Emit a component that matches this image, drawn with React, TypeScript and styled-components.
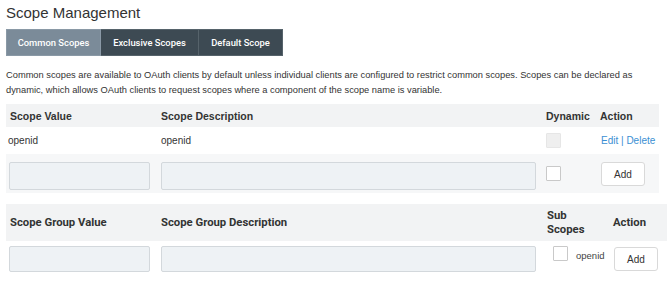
import React from 'react';
import styled, { createGlobalStyle } from 'styled-components';

const GlobalStyle = createGlobalStyle`
  body {
    margin: 0;
    background: #fff;
    font-family: "Liberation Sans", Arial, sans-serif;
    color: #333;
  }
`;

const Page = styled.div`
  padding: 4px 0 0 6px;
  width: 661px;
`;

const Title = styled.h1`
  margin: 0;
  font-size: 15px;
  line-height: 18px;
  font-weight: normal;
  color: #333;
`;

const Tabs = styled.div`
  display: flex;
  margin-top: 7px;
`;

const Tab = styled.button<{ $active?: boolean; $w: number }>`
  height: 27px;
  border: 1px solid ${p => (p.$active ? '#8a99a6' : '#56636b')};
  border-left-width: ${p => (p.$active ? '1px' : '0')};
  background: ${p => (p.$active ? '#7b8b99' : '#3d4a53')};
  color: #fff;
  font-family: Roboto, "Liberation Sans", Arial, sans-serif;
  font-size: 9.4px;
  font-weight: 500;
  padding: 0;
  width: ${p => p.$w}px;
  cursor: pointer;
`;

const Intro = styled.p`
  margin: 12px 0 0;
  font-size: 9.3px;
  line-height: 15px;
  color: #333;
  width: 650px;
`;

const Table = styled.div<{ $cols: string; $width: number }>`
  display: grid;
  grid-template-columns: ${p => p.$cols};
  width: ${p => p.$width}px;
  font-size: 10px;
`;

const HeadCell = styled.div<{ $h: number; $alt?: boolean }>`
  background: #f2f3f4;
  height: ${p => p.$h}px;
  display: flex;
  align-items: center;
  padding-left: 4px;
  font-weight: bold;
  font-size: ${p => (p.$alt ? '11.3px' : '10.5px')};
  line-height: 14px;
  color: #333;
  font-family: ${p => (p.$alt ? 'Roboto, Arial, sans-serif' : '"Liberation Sans", Arial, sans-serif')};
`;

const Cell = styled.div<{ $h: number; $shade?: boolean; $top?: number; $pl?: number }>`
  height: ${p => p.$h}px;
  box-sizing: border-box;
  background: ${p => (p.$shade ? '#f6f7f8' : '#fff')};
  display: flex;
  align-items: ${p => (p.$top !== undefined ? 'flex-start' : 'center')};
  padding-top: ${p => p.$top ?? 0}px;
  padding-left: ${p => p.$pl ?? 2}px;
  gap: 8px;
  color: #333;
`;

const TextInput = styled.input<{ $w: number; $h: number }>`
  box-sizing: border-box;
  width: ${p => p.$w}px;
  height: ${p => p.$h}px;
  background: #eef2f5;
  border: 1px solid #d3d8dc;
  border-radius: 2px;
  margin: 0;
`;

const Check = styled.span<{ $disabled?: boolean }>`
  display: inline-block;
  box-sizing: border-box;
  width: 15px;
  height: 15px;
  border: 1px solid ${p => (p.$disabled ? '#e6e6e6' : '#c9c9c9')};
  background: ${p => (p.$disabled ? '#efefef' : '#fff')};
  border-radius: 1px;
  flex: none;
`;

const SubLabel = styled.span`
  margin-top: 4px;
  font-size: 9.5px;
  color: #444;
`;

const AddButton = styled.button`
  box-sizing: border-box;
  width: 44px;
  height: 24px;
  background: #fff;
  border: 1px solid #d9d9d9;
  border-radius: 3px;
  font-family: "Liberation Sans", Arial, sans-serif;
  font-size: 10px;
  color: #333;
  padding: 0;
  margin: 0;
`;

const Links = styled.span`
  color: #3a8fd3;
  font-size: 10px;
  white-space: nowrap;
`;

const Link = styled.a`
  color: #3a8fd3;
  text-decoration: none;
`;

const Spacer = styled.div<{ $h: number }>`
  height: ${p => p.$h}px;
`;

const App = () => {
  return (
    <>
      <GlobalStyle />
      <Page>
        <Title>Scope Management</Title>
        <Tabs>
          <Tab $active $w={95}>Common Scopes</Tab>
          <Tab $w={98}>Exclusive Scopes</Tab>
          <Tab $w={84}>Default Scope</Tab>
        </Tabs>
        <Intro>
          Common scopes are available to OAuth clients by default unless individual clients are configured to restrict common scopes. Scopes can be declared as dynamic, which allows OAuth clients to request scopes where a component of the scope name is variable.
        </Intro>

        <Spacer $h={6} />
        <Table $cols="151px 385px 54px 63px" $width={653}>
          <HeadCell $h={23}>Scope Value</HeadCell>
          <HeadCell $h={23}>Scope Description</HeadCell>
          <HeadCell $h={23}>Dynamic</HeadCell>
          <HeadCell $h={23}>Action</HeadCell>

          <Cell $h={27}>openid</Cell>
          <Cell $h={27} $pl={4}>openid</Cell>
          <Cell $h={27} $pl={4}><Check $disabled /></Cell>
          <Cell $h={27} $pl={5}>
            <Links><Link href="#">Edit</Link> | <Link href="#">Delete</Link></Links>
          </Cell>

          <Cell $h={39} $shade $top={8} $pl={3}><TextInput $w={141} $h={28} /></Cell>
          <Cell $h={39} $shade $top={8} $pl={4}><TextInput $w={375} $h={28} /></Cell>
          <Cell $h={39} $shade $top={12} $pl={4}><Check /></Cell>
          <Cell $h={39} $shade $top={8} $pl={5}><AddButton>Add</AddButton></Cell>
        </Table>

        <Spacer $h={11} />
        <Table $cols="151px 386px 66px 58px" $width={661}>
          <HeadCell $h={37} $alt>Scope Group Value</HeadCell>
          <HeadCell $h={37} $alt>Scope Group Description</HeadCell>
          <HeadCell $h={37} $alt>Sub<br />Scopes</HeadCell>
          <HeadCell $h={37} $alt>Action</HeadCell>

          <Cell $h={40} $top={5} $pl={3}><TextInput $w={141} $h={26} /></Cell>
          <Cell $h={40} $top={5} $pl={4}><TextInput $w={375} $h={26} /></Cell>
          <Cell $h={40} $top={5} $pl={10}><Check /><SubLabel>openid</SubLabel></Cell>
          <Cell $h={40} $top={6} $pl={5}><AddButton>Add</AddButton></Cell>
        </Table>
      </Page>
    </>
  );
};

export default App;
